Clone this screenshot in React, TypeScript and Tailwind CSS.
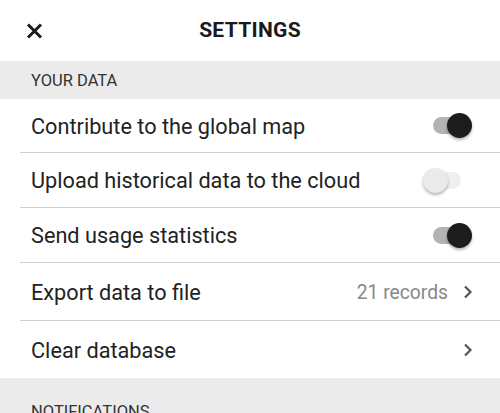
import { useState } from "react";

function Toggle({ on }: { on: boolean }) {
  return (
    <div className="relative h-[25px] w-[48px]">
      <div className={`absolute left-[10px] top-[4px] h-[17px] w-[28px] rounded-full ${on ? "bg-[#b3b3b3]" : "bg-[#efefef]"}`} />
      <div
        className={`absolute top-0 h-[25px] w-[25px] rounded-full shadow-[0_2px_3px_rgba(0,0,0,0.3)] ${
          on ? "left-[24px] bg-[#1c1c1c]" : "left-0 bg-[#eaeaea]"
        }`}
      />
    </div>
  );
}

function Chevron() {
  return (
    <svg width="10" height="14" viewBox="0 0 10 14" className="text-[#555]">
      <path d="M2 1.5 L7.5 7 L2 12.5" fill="none" stroke="currentColor" strokeWidth="2.2" />
    </svg>
  );
}

export default function App() {
  const [toggles, setToggles] = useState([true, false, true]);
  const labels = ["Contribute to the global map", "Upload historical data to the cloud", "Send usage statistics"];
  const heights = ["h-[54px]", "h-[55px]", "h-[55px]"];

  return (
    <div className="h-[413px] overflow-hidden bg-white text-[#222]" style={{ fontFamily: "Roboto, 'Noto Sans', sans-serif" }}>
      <div className="grid h-[61px] grid-cols-[1fr_auto_1fr] items-center">
        <div className="pl-[26px]">
          <svg width="17" height="16" viewBox="0 0 17 16">
            <path d="M2 1.5 L15 14.5 M15 1.5 L2 14.5" stroke="#1a1a1a" strokeWidth="3" />
          </svg>
        </div>
        <h1 className="text-[21px] font-bold tracking-[0.3px] text-[#1a1a1a]">SETTINGS</h1>
        <div />
      </div>

      <div className="flex h-[38px] items-center bg-[#ebebeb] pl-[31px] pt-[2px] text-[16.5px] text-[#333]">YOUR DATA</div>

      {labels.map((label, i) => (
        <div key={label} className={`ml-[20px] flex items-center justify-between border-b border-[#cfcfcf] pl-[11px] pr-[29px] ${heights[i]}`}>
          <span className="pt-[3px] text-[21.7px]">{label}</span>
          <button onClick={() => setToggles(toggles.map((t, j) => (j === i ? !t : t)))}>
            <Toggle on={toggles[i]} />
          </button>
        </div>
      ))}

      <div className="ml-[20px] flex h-[58px] items-center justify-between border-b border-[#cfcfcf] pl-[11px] pr-[27px]">
        <span className="pt-[3px] text-[21.7px]">Export data to file</span>
        <div className="flex items-center gap-[15px]">
          <span className="pt-[3px] text-[19.3px] text-[#888]">21 records</span>
          <Chevron />
        </div>
      </div>
      <div className="ml-[20px] flex h-[57px] items-center justify-between pl-[11px] pr-[27px]">
        <span className="pt-[3px] text-[21.7px]">Clear database</span>
        <Chevron />
      </div>

      <div className="flex h-[60px] items-start bg-[#ebebeb] pl-[31px] pt-[22px] text-[16.5px] text-[#333]">NOTIFICATIONS</div>
    </div>
  );
}
